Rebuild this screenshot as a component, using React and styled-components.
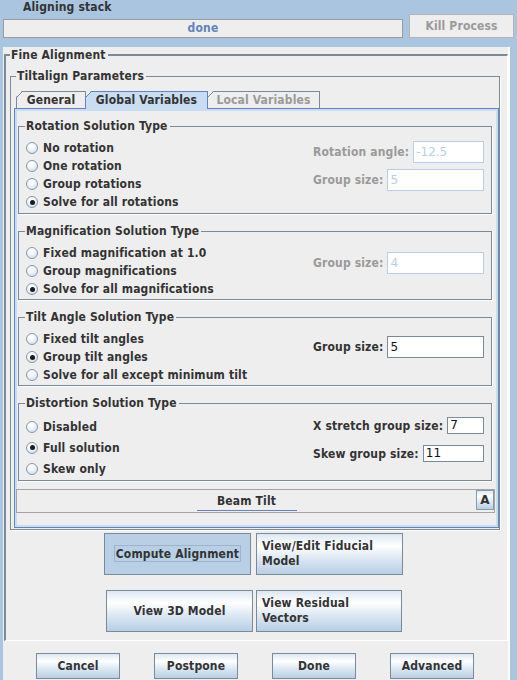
import React from 'react'
import styled, { createGlobalStyle } from 'styled-components'

const GlobalStyle = createGlobalStyle`
  html, body { margin: 0; padding: 0; background: #aac5e0; }
  * { box-sizing: border-box; }
`

const OCEAN = 'linear-gradient(to bottom, #dde8f3 0%, #ffffff 30%, #dde8f3 60%, #b8cfe5 100%)'
const UI_FONT = "bold 12px 'DejaVu Sans Condensed', 'DejaVu Sans', sans-serif"

const Frame = styled.div`
  width: 517px;
  height: 680px;
  overflow: hidden;
  background: #aac5e0;
  font: ${UI_FONT};
  font-stretch: condensed;
  letter-spacing: 0.15px;
  color: #333;
`

const Caption = styled.div`
  height: 14px;
  line-height: 14px;
  padding-left: 23px;
`

const StatusRow = styled.div`
  display: flex;
  align-items: flex-end;
  gap: 6px;
  height: 24px;
  padding-left: 3px;
`

const ProgressBar = styled.div`
  width: 400px;
  height: 19px;
  border: 1px solid #9a9a9a;
  background: #eee;
  color: #6382bf;
  text-align: center;
  line-height: 17px;
`

const KillButton = styled.button`
  width: 105px;
  height: 24px;
  padding: 0;
  border: 1px solid #b4b4b4;
  background: #eee;
  color: #9a9a9a;
  font: inherit;
  letter-spacing: inherit;
`

const MainPanel = styled.div`
  margin: 9px 0 0 3px;
  width: 507px;
  height: 633px;
  padding-top: 1px;
  background: #eee;
  border-right: 2px solid #fff;
`

const Group = styled.fieldset`
  margin: ${p => p.$margin || 0};
  min-width: 0;
  width: ${p => p.$w}px;
  padding: ${p => p.$pad};
  border: 1px solid #7a8a99;
  box-shadow: 1px 1px 0 #fff;
`

const FineGroup = styled(Group)`
  border-width: 2px 1px 1px 2px;
  border-color: #7a8a99 #fff #fff #7a8a99;
  box-shadow: none;
`

const Legend = styled.legend`
  margin-left: ${p => p.$indent || 0}px;
  padding: 0 2px 0 1px;
  line-height: ${p => p.$lh || 13}px;
  color: #333;
`

const TabStrip = styled.div`
  display: flex;
  height: 17px;
  padding-left: 2px;
`

const Tab = styled.div`
  position: relative;
  z-index: ${p => (p.$active ? 2 : 1)};
  width: ${p => p.$w}px;
  height: ${p => (p.$active ? 18 : 17)}px;
  margin-right: -1px;
  border: 1px solid ${p => (p.$active ? '#6382bf' : '#7a8a99')};
  border-bottom: 0;
  background: linear-gradient(
      135deg,
      transparent 0 4.4px,
      ${p => (p.$active ? '#6382bf' : '#7a8a99')} 4.4px 5.5px,
      ${p => (p.$active ? '#c8ddf2' : '#eee')} 5.5px
    )
    border-box;
  clip-path: polygon(6px 0, 100% 0, 100% 100%, 0 100%, 0 6px);
  text-align: center;
  line-height: 16px;
  color: ${p => (p.$disabled ? '#9a9a9a' : '#333')};
`

const TabBody = styled.div`
  height: 420px;
  border: 1px solid #6382bf;
  padding: 2px;
  background: #c8ddf2;
`

const TabInner = styled.div`
  height: 100%;
  display: flex;
  flex-direction: column;
  padding: 9px 4px 0 1px;
  background: #eee;
`

const Section = styled(Group)`
  display: flex;
  justify-content: space-between;
  padding: 6px 7px ${p => p.$pb}px 7px;
`

const RadioList = styled.div`
  display: flex;
  flex-direction: column;
`

const RadioRow = styled.label`
  display: flex;
  align-items: center;
  gap: 5px;
  height: ${p => p.$h}px;
  white-space: nowrap;
`

const RadioDot = styled.span`
  display: flex;
  align-items: center;
  justify-content: center;
  width: 12px;
  height: 12px;
  border-radius: 50%;
  border: 1px solid #8797a8;
  background: radial-gradient(circle at 40% 30%, #ffffff 0, #f4f8fc 35%, #c4d6e8 100%);

  &::after {
    content: '';
    display: ${p => (p.$on ? 'block' : 'none')};
    width: 5px;
    height: 5px;
    border-radius: 50%;
    background: #1a1a1a;
  }
`

const FieldColumn = styled.div`
  display: flex;
  flex-direction: column;
  gap: ${p => p.$gap}px;
  width: 171px;
  padding-top: ${p => p.$top}px;
`

const FieldRow = styled.div`
  display: flex;
  align-items: center;
  gap: 4px;
  height: ${p => p.$h}px;
  color: ${p => (p.$disabled ? '#9a9a9a' : '#333')};
  white-space: nowrap;
`

const Field = styled.div`
  flex: 1;
  height: 100%;
  padding-left: 2px;
  border: 1px solid ${p => (p.$disabled ? '#b8cfe5' : '#7a8a99')};
  background: #fff;
  font: 12px 'DejaVu Sans', sans-serif;
  letter-spacing: 0;
  line-height: ${p => p.$h - 2}px;
  color: ${p => (p.$disabled ? '#b8cfe5' : '#111')};
`

const BeamBar = styled.div`
  display: flex;
  height: 24px;
  margin: 8px -3px 0 -2px;
  border: 1px solid #a4a4a4;
`

const BeamTitle = styled.div`
  flex: 1;
  display: flex;
  flex-direction: column;
  align-items: center;
  padding-top: 4px;
  line-height: 14px;

  &::after {
    content: '';
    width: 100px;
    height: 1px;
    margin-top: 2px;
    background: #6382bf;
  }
`

const SmallButton = styled.button`
  width: 18px;
  height: 20px;
  padding: 0;
  border: 1px solid #8a9aab;
  background: ${OCEAN};
  font: bold 12px 'DejaVu Sans', sans-serif;
  color: #333;
`

const ActionRow = styled.div`
  display: flex;
  gap: ${p => p.$gap}px;
  margin: ${p => p.$top}px 0 0 ${p => p.$left}px;
`

const OceanButton = styled.button`
  width: ${p => p.$w}px;
  height: ${p => p.$h}px;
  padding: 0 0 0 ${p => (p.$left ? 5 : 0)}px;
  border: 1px solid #7a8a99;
  background: ${p => (p.$pressed ? '#b8cfe5' : OCEAN)};
  font: ${UI_FONT};
  font-stretch: condensed;
  letter-spacing: 0.15px;
  line-height: 15px;
  color: #333;
  text-align: ${p => (p.$left ? 'left' : 'center')};
`

const FocusText = styled.span`
  padding: 1px 1px 0;
  border: 1px solid #9fb3c9;
`

const FooterRow = styled.div`
  display: flex;
  gap: 34px;
  margin-top: 12px;
  padding-left: 33px;
`

const Radios = ({ items, selected, h = 18 }) => (
  <RadioList>
    {items.map(label => (
      <RadioRow key={label} $h={h}>
        <RadioDot $on={label === selected} />
        {label}
      </RadioRow>
    ))}
  </RadioList>
)

const Fields = ({ rows, top, gap = 6, h = 22 }) => (
  <FieldColumn $top={top} $gap={gap}>
    {rows.map(([label, value, disabled]) => (
      <FieldRow key={label} $h={h} $disabled={disabled}>
        {label}
        <Field $h={h} $disabled={disabled}>{value}</Field>
      </FieldRow>
    ))}
  </FieldColumn>
)

const App = () => (
  <Frame>
    <GlobalStyle />
    <Caption>Aligning stack</Caption>
    <StatusRow>
      <ProgressBar>done</ProgressBar>
      <KillButton disabled>Kill Process</KillButton>
    </StatusRow>

    <MainPanel>
      <FineGroup $w={504} $margin="0 0 0 1px" $pad="8px 0 8px 4px">
        <Legend $lh={14}>Fine Alignment</Legend>

        <Group $w={490} $pad="8px 0 1px 3px">
          <Legend $indent={2}>Tiltalign Parameters</Legend>
          <TabStrip>
            <Tab $w={70}>General</Tab>
            <Tab $w={123} $active>Global Variables</Tab>
            <Tab $w={113} $disabled>Local Variables</Tab>
          </TabStrip>
          <TabBody>
            <TabInner>
              <Section $w={474} $pb={2}>
                <Legend $indent={-1}>Rotation Solution Type</Legend>
                <Radios
                  items={['No rotation', 'One rotation', 'Group rotations', 'Solve for all rotations']}
                  selected="Solve for all rotations"
                />
                <Fields
                  top={2}
                  rows={[
                    ['Rotation angle:', '-12.5', true],
                    ['Group size:', '5', true],
                  ]}
                />
              </Section>

              <Section $w={474} $pb={1} $margin="11px 0 0">
                <Legend $indent={-1}>Magnification Solution Type</Legend>
                <Radios
                  items={['Fixed magnification at 1.0', 'Group magnifications', 'Solve for all magnifications']}
                  selected="Solve for all magnifications"
                />
                <Fields top={8} rows={[['Group size:', '4', true]]} />
              </Section>

              <Section $w={474} $pb={1} $margin="11px 0 0">
                <Legend $indent={-1}>Tilt Angle Solution Type</Legend>
                <Radios
                  items={['Fixed tilt angles', 'Group tilt angles', 'Solve for all except minimum tilt']}
                  selected="Group tilt angles"
                />
                <Fields top={6} rows={[['Group size:', '5', false]]} />
              </Section>

              <Section $w={474} $pb={1} $margin="11px 0 0">
                <Legend $indent={-1}>Distortion Solution Type</Legend>
                <Radios h={21} items={['Disabled', 'Full solution', 'Skew only']} selected="Full solution" />
                <Fields
                  top={1}
                  gap={11}
                  h={17}
                  rows={[
                    ['X stretch group size:', '7', false],
                    ['Skew group size:', '11', false],
                  ]}
                />
              </Section>

              <BeamBar>
                <BeamTitle>Beam Tilt</BeamTitle>
                <SmallButton>A</SmallButton>
              </BeamBar>
            </TabInner>
          </TabBody>
        </Group>

        <ActionRow $top={3} $left={94} $gap={5}>
          <OceanButton $w={147} $h={42} $pressed>
            <FocusText>Compute Alignment</FocusText>
          </OceanButton>
          <OceanButton $w={147} $h={42} $left>
            View/Edit Fiducial
            <br />
            Model
          </OceanButton>
        </ActionRow>
        <ActionRow $top={15} $left={96} $gap={3}>
          <OceanButton $w={147} $h={42}>View 3D Model</OceanButton>
          <OceanButton $w={146} $h={42} $left>
            View Residual
            <br />
            Vectors
          </OceanButton>
        </ActionRow>
      </FineGroup>

      <FooterRow>
        <OceanButton $w={84} $h={26}>Cancel</OceanButton>
        <OceanButton $w={84} $h={26}>Postpone</OceanButton>
        <OceanButton $w={84} $h={26}>Done</OceanButton>
        <OceanButton $w={84} $h={26}>Advanced</OceanButton>
      </FooterRow>
    </MainPanel>
  </Frame>
)

export default App
